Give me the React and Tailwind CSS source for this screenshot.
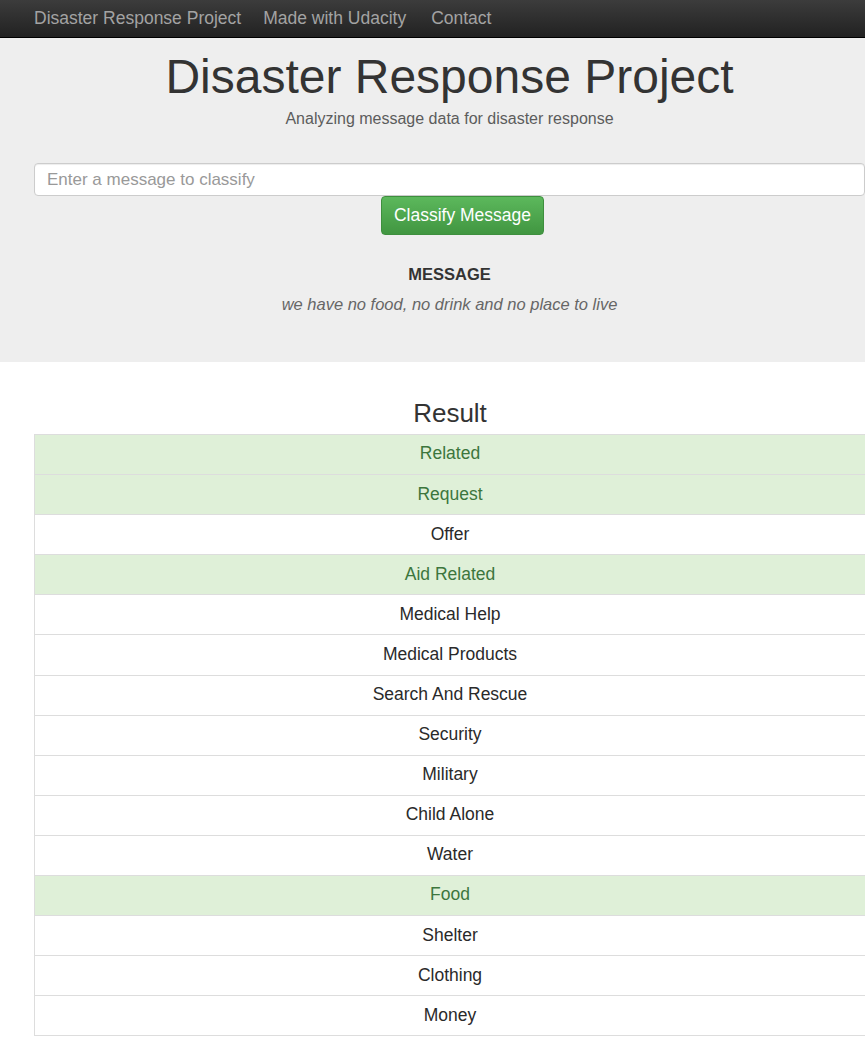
const categories = [
  { name: "Related", hit: true },
  { name: "Request", hit: true },
  { name: "Offer" },
  { name: "Aid Related", hit: true },
  { name: "Medical Help" },
  { name: "Medical Products" },
  { name: "Search And Rescue" },
  { name: "Security" },
  { name: "Military" },
  { name: "Child Alone" },
  { name: "Water" },
  { name: "Food", hit: true },
  { name: "Shelter" },
  { name: "Clothing" },
  { name: "Money" },
];

export default function App() {
  return (
    <div className="min-h-screen w-[865px] overflow-hidden bg-white font-['Liberation_Sans',Arial,sans-serif] text-[#333]">
      {/* navbar */}
      <nav className="flex h-[38px] items-center gap-[22px] border-b border-black bg-gradient-to-b from-[#3c3c3c] to-[#222] pl-[34px] text-[17.5px] text-[#a3a3a3]">
        <span>Disaster Response Project</span>
        <span>Made with Udacity</span>
        <span className="ml-[3px]">Contact</span>
      </nav>

      {/* jumbotron */}
      <div className="bg-[#eeeeee] pb-[48px] pt-[12px]">
        <div className="ml-[34px] w-[831px]">
          <h1 className="text-center text-[48px] leading-[53px] text-[#333]">Disaster Response Project</h1>
          <p className="mt-[6px] text-center text-[16px] leading-[20px] text-[#5c5c5c]">
            Analyzing message data for disaster response
          </p>

          <form className="mt-[34px] flex flex-col items-center" onSubmit={(e) => e.preventDefault()}>
            <input
              type="text"
              placeholder="Enter a message to classify"
              className="h-[33px] w-full rounded-[4px] border border-[#ccc] bg-white px-[12px] text-[17px] text-[#555] shadow-[inset_0_1px_1px_rgba(0,0,0,0.075)] outline-none placeholder:text-[#999]"
            />
            <button
              type="submit"
              className="ml-[26px] h-[39px] rounded-[4px] border border-[#3e8f3e] bg-gradient-to-b from-[#5cb85c] to-[#419641] px-[12px] text-[17.5px] text-white"
            >
              Classify Message
            </button>
          </form>

          <div className="mt-[29px] text-center text-[16.5px] font-bold leading-[20px] text-[#333]">MESSAGE</div>
          <div className="mt-[10px] text-center text-[16.5px] italic leading-[20px] text-[#666]">
            we have no food, no drink and no place to live
          </div>
        </div>
      </div>

      {/* results */}
      <div className="ml-[34px] w-[832px]">
        <h2 className="mt-[36px] text-center text-[26px] leading-[30px] text-[#333]">Result</h2>
        <ul className="mt-[6px] border-x border-b border-[#ddd]">
          {categories.map((c) => (
            <li
              key={c.name}
              className={
                "flex h-[40.1px] items-center justify-center border-t border-[#ddd] pb-[2px] text-[17.5px] " +
                (c.hit ? "bg-[#dff0d8] text-[#3c763d]" : "bg-white text-[#2a2a2a]")
              }
            >
              {c.name}
            </li>
          ))}
        </ul>
      </div>
    </div>
  );
}
